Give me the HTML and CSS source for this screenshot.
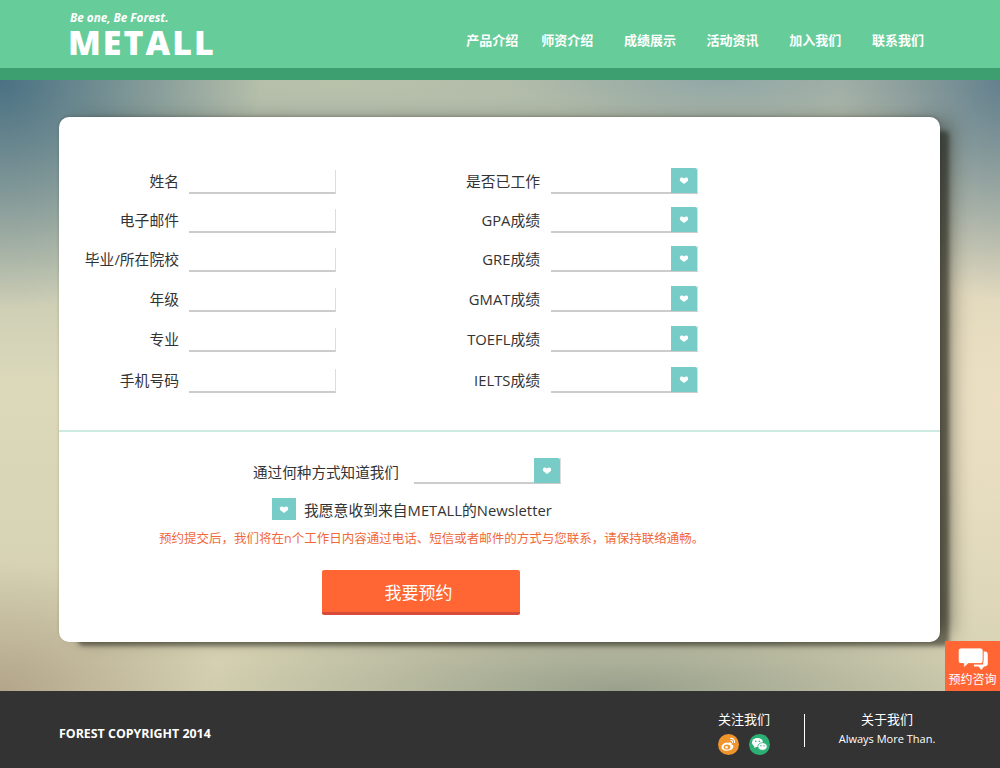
FILE: index.html
```html
<!DOCTYPE html>
<html lang="zh-CN">
<head>
    <meta charset="UTF-8">
    <title>METALL</title>
    <link rel="stylesheet" href="styles.css">
</head>
<body>
    <svg class="defs" width="0" height="0">
        <symbol id="heart" viewBox="0 0 12 9">
            <path d="M6 9 1 5C0 3 1 .5 3 .5c1.300 0 2.300.6 3 1.500C6.700 1.100 7.700.5 9 .5c2 0 3 2.500 2 4.500z"/>
        </symbol>
    </svg>

    <div class="header">
        <div class="logo">
            <div class="logo_s">Be one, Be Forest.</div>
            <div class="logo_t">METALL</div>
        </div>
        <div class="nav">
            <a class="first">产品介绍</a>
            <a>师资介绍</a>
            <a>成绩展示</a>
            <a>活动资讯</a>
            <a>加入我们</a>
            <a>联系我们</a>
        </div>
    </div>

    <div class="main">
        <div class="card">
            <div class="card_t">
                <div class="col col_l">
                    <div class="row"><label>姓名</label><span class="input"></span></div>
                    <div class="row"><label>电子邮件</label><span class="input"></span></div>
                    <div class="row"><label>毕业/所在院校</label><span class="input"></span></div>
                    <div class="row"><label>年级</label><span class="input"></span></div>
                    <div class="row"><label>专业</label><span class="input"></span></div>
                    <div class="row"><label>手机号码</label><span class="input"></span></div>
                </div>
                <div class="col col_r">
                    <div class="row"><label>是否已工作</label><span class="select"><i class="arrow"><svg><use href="#heart"/></svg></i></span></div>
                    <div class="row"><label>GPA成绩</label><span class="select"><i class="arrow"><svg><use href="#heart"/></svg></i></span></div>
                    <div class="row"><label>GRE成绩</label><span class="select"><i class="arrow"><svg><use href="#heart"/></svg></i></span></div>
                    <div class="row"><label>GMAT成绩</label><span class="select"><i class="arrow"><svg><use href="#heart"/></svg></i></span></div>
                    <div class="row"><label>TOEFL成绩</label><span class="select"><i class="arrow"><svg><use href="#heart"/></svg></i></span></div>
                    <div class="row"><label>IELTS成绩</label><span class="select"><i class="arrow"><svg><use href="#heart"/></svg></i></span></div>
                </div>
            </div>
            <div class="card_d">
                <div class="how">
                    <label>通过何种方式知道我们</label>
                    <span class="select"><i class="arrow"><svg><use href="#heart"/></svg></i></span>
                </div>
                <div class="news">
                    <i class="check"><svg><use href="#heart"/></svg></i>
                    <span>我愿意收到来自METALL的Newsletter</span>
                </div>
                <div class="tip">预约提交后，我们将在n个工作日内容通过电话、短信或者邮件的方式与您联系，请保持联络通畅。</div>
                <button class="btn">我要预约</button>
            </div>
        </div>
        <div class="consult">
            <svg viewBox="0 0 32 26" width="30" height="24">
                <path d="M27 5h2a3 3 0 0 1 3 3v10a3 3 0 0 1-3 3h-1l-3 4-3-4h-5v-2h10z"/>
                <path class="front" d="M3 1h21a3 3 0 0 1 3 3v11a3 3 0 0 1-3 3H11l-5 4.500V18H3a3 3 0 0 1-3-3V4a3 3 0 0 1 3-3z"/>
            </svg>
            <span>预约咨询</span>
        </div>
    </div>

    <div class="footer">
        <div class="copy">FOREST COPYRIGHT 2014</div>
        <div class="follow">
            <div class="f_t">关注我们</div>
            <div class="icons">
                <svg viewBox="0 0 21 21" width="21" height="21">
                    <circle cx="10.500" cy="10.500" r="10.500" fill="#f0942c"/>
                    <path d="M9 8.500c-3 .3-5.500 2.300-5.500 4.700 0 2 2.300 3.600 5.500 3.600 3.500 0 6.500-2 6.500-4.200 0-1.300-1.200-1.800-2-2 .4-1 .3-2.600-2-2-1 .2-1.500.4-2.500-.1z" fill="#fff"/>
                    <ellipse cx="9" cy="13" rx="3.400" ry="2.600" fill="#f0942c"/>
                    <circle cx="8.500" cy="13.200" r="1.300" fill="#fff"/>
                    <path d="M12.500 4.500c2.500-.5 4.500 1.500 4 4M12.800 6.500c1.200-.2 2 .7 1.800 1.800" fill="none" stroke="#fff" stroke-width="1.100" stroke-linecap="round"/>
                </svg>
                <svg viewBox="0 0 21 21" width="21" height="21">
                    <circle cx="10.500" cy="10.500" r="10.500" fill="#2baf75"/>
                    <ellipse cx="8.500" cy="8.500" rx="5.500" ry="4.500" fill="#fff"/>
                    <path d="M5.500 11.500 5 14l3-1.500z" fill="#fff"/>
                    <ellipse cx="13.500" cy="12.500" rx="4.700" ry="3.800" fill="#fff" stroke="#2baf75" stroke-width=".8"/>
                    <circle cx="6.700" cy="7.300" r=".8" fill="#2baf75"/>
                    <circle cx="10.300" cy="7.300" r=".8" fill="#2baf75"/>
                    <circle cx="12" cy="11.800" r=".7" fill="#2baf75"/>
                    <circle cx="15" cy="11.800" r=".7" fill="#2baf75"/>
                </svg>
            </div>
        </div>
        <div class="about">
            <div class="f_t">关于我们</div>
            <div class="more">Always More Than.</div>
        </div>
    </div>
</body>
</html>
```

FILE: styles.css
```css
* {
    box-sizing: border-box;
}
body {
    margin: 0;
    width: 1000px;
    height: 768px;
    overflow: hidden;
    font-family: "Open Sans", "Noto Sans CJK SC", sans-serif;
    color: #333;
}
.defs {
    display: block;
}

.header {
    height: 80px;
    padding: 0 76px 0 70px;
    background-color: #66cc99;
    border-bottom: 12px solid #3d9f6f;
    display: flex;
    justify-content: space-between;
    align-items: center;
}
.logo {
    color: #fff;
}
.logo_s {
    font-size: 11.700px;
    line-height: 14px;
    font-weight: 700;
    font-style: italic;
    margin-bottom: 2px;
}
.logo_t {
    font-size: 34px;
    line-height: 32px;
    font-weight: 800;
    letter-spacing: 2px;
    margin-left: -2px;
}
.nav {
    display: flex;
    gap: 30.700px;
    margin-top: 11px;
}
.nav a {
    color: #fff;
    font-size: 13px;
    font-weight: 700;
    font-family: "Noto Sans CJK SC", sans-serif;
}
.nav .first {
    margin-right: -7.700px;
}

.main {
    position: relative;
    height: 611px;
    padding: 37px 60px 0 59px;
    background-image:
        radial-gradient(ellipse 260px 230px at 0 0, #4a7183 0, rgba(74, 113, 131, 0) 100%),
        radial-gradient(ellipse 160px 220px at 1000px 0, #64818e 0, rgba(100, 129, 142, 0) 100%),
        radial-gradient(ellipse 200px 50px at 720px 0, #92a8a6 0, rgba(146, 168, 166, 0) 100%),
        radial-gradient(ellipse 420px 70px at 340px 0, #b8c2ab 0, rgba(184, 194, 171, 0) 100%),
        radial-gradient(ellipse 420px 90px at 620px 611px, #98a08c 0, rgba(152, 160, 140, 0) 100%),
        radial-gradient(ellipse 220px 130px at 0 611px, #b3a58a 0, rgba(179, 165, 138, 0) 100%),
        radial-gradient(ellipse 320px 320px at 1000px 320px, #ecdfc3 0, rgba(236, 223, 195, 0) 100%),
        linear-gradient(180deg, #a9b3a6 0, #dcd9bb 50%, #d3cfb0 100%);
}
.card {
    height: 525px;
    background-color: #fff;
    border-radius: 10px;
    box-shadow: 16px 0 20px -6px rgba(30, 30, 20, .55), 14px 9px 4px -5px rgba(30, 30, 20, .5), 0 -1px 3px rgba(30, 30, 20, .2);
}
.card_t {
    height: 315px;
    padding-top: 44px;
    border-bottom: 2px solid #cdeae3;
    display: flex;
}
.col_l {
    width: 277px;
}
.col_r {
    width: 362px;
    margin-left: 108px;
}
.row {
    height: 39px;
    display: flex;
    align-items: flex-start;
    font-size: 14.800px;
}
.row:nth-child(3), .row:nth-child(4) {
    height: 40px;
}
.row:nth-child(5) {
    height: 41px;
}
.row label {
    display: block;
    width: 120px;
    line-height: 40px;
    text-align: right;
    white-space: nowrap;
    margin-right: 10px;
}
.col_r .row label {
    width: 97px;
    margin-right: 11px;
    margin-left: -1px;
}
.input {
    display: block;
    width: 147px;
    height: 24px;
    margin-top: 9px;
    background-color: #fff;
    border-bottom: 2px solid #ccc;
    border-right: 1px solid #ddd;
}
.select {
    display: block;
    position: relative;
    width: 147px;
    height: 26px;
    margin-top: 7px;
    border-bottom: 2px solid #ccc;
    border-right: 1px solid #ddd;
}
.arrow {
    position: absolute;
    right: 0;
    top: 0;
    width: 26px;
    height: 25px;
    background-color: #77ccc7;
    border-radius: 0 2px 0 0;
    display: flex;
    align-items: center;
    justify-content: center;
}
.arrow svg, .check svg {
    width: 10px;
    height: 7px;
    fill: #fff;
}

.card_d {
    font-size: 14.600px;
}
.how {
    display: flex;
    align-items: center;
    padding: 26px 0 0 194px;
}
.how label {
    margin-right: 15px;
}
.how .select {
    margin-top: 0;
}
.news {
    display: flex;
    align-items: center;
    padding: 14px 0 0 213px;
}
.check {
    display: flex;
    align-items: center;
    justify-content: center;
    width: 24px;
    height: 22px;
    margin-right: 8px;
    background-color: #77ccc7;
}
.news span {
    font-size: 14.800px;
    white-space: nowrap;
}
.tip {
    padding: 10px 0 0 100px;
    font-size: 12.500px;
    line-height: 18px;
    color: #f0693c;
    white-space: nowrap;
}
.btn {
    display: block;
    width: 198px;
    height: 45px;
    margin: 22px 0 0 263px;
    padding: 0 5px 0 0;
    border: 0;
    border-bottom: 3px solid #d84a3c;
    border-radius: 2px;
    background-color: #ff6633;
    color: #fff;
    font-size: 17px;
    font-family: "Noto Sans CJK SC", sans-serif;
}

.consult {
    position: absolute;
    right: 0;
    bottom: 0;
    width: 55px;
    height: 50px;
    background-color: #ff6633;
    color: #fff;
    text-align: center;
    padding-top: 6px;
}
.consult svg {
    display: block;
    margin: 0 auto;
    fill: #fff;
}
.consult .front {
    stroke: #ff6633;
    stroke-width: 1;
}
.consult span {
    display: block;
    font-size: 12px;
    line-height: 18px;
    white-space: nowrap;
}

.footer {
    height: 77px;
    background-color: #333;
    color: #fff;
    display: flex;
    align-items: flex-start;
    padding-left: 59px;
}
.copy {
    width: 659px;
    margin-top: 34px;
    font-size: 12.400px;
    line-height: 18px;
    font-weight: 700;
}
.follow {
    width: 87px;
    height: 33px;
    margin-top: 23px;
    border-right: 1px solid #fff;
    font-size: 13px;
}
.follow .f_t {
    margin-top: -3px;
}
.f_t {
    line-height: 16px;
}
.icons {
    display: flex;
    gap: 10px;
    margin-top: 7px;
}
.about {
    width: 164px;
    margin-top: 20px;
    text-align: center;
    font-size: 13px;
}
.more {
    font-size: 11px;
    line-height: 16px;
    margin-top: 4px;
    white-space: nowrap;
}
```
